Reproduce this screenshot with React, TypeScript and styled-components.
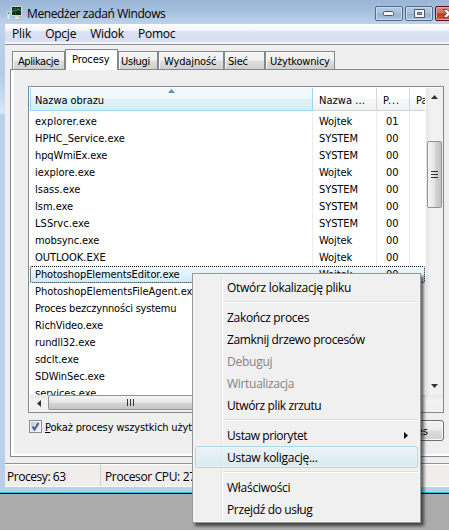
import React from "react";
import styled, { createGlobalStyle } from "styled-components";

const Global = createGlobalStyle`
  * { box-sizing: border-box; }
  body { margin: 0; overflow: hidden; background: #ababab; }
`;

const tahoma = `"DejaVu Sans Condensed", "DejaVu Sans", sans-serif`;
const segoe = `"Open Sans", "Noto Sans", sans-serif`;

const Desktop = styled.div`
  position: relative;
  width: 449px;
  height: 530px;
  overflow: hidden;
  background: #ababab;
  color: #000;
  white-space: nowrap;
`;

const Window = styled.main`
  height: 494px;
  display: flex;
  flex-direction: column;
  padding: 0 0 6px 5px;
  border-bottom: 1px solid #050505;
  box-shadow: inset 0 -1px #18c9df;
  background: linear-gradient(#9bb5d6 0, #a5c0de 12px, #bdd3ea 24px, #b4cce8 75px, #d8e7f7 113px, #b9cfea 115px, #b9cfea 100%);
`;

const TitleBar = styled.header`
  height: 24px;
  flex: none;
  display: flex;
  align-items: flex-start;
  padding: 5px 0 0 2px;
  font: 12px/18px ${segoe};
`;

const Title = styled.span`
  flex: 1;
  padding-left: 4px;
  letter-spacing: -0.4px;
`;

const Captions = styled.div`
  width: 74px;
  height: 16px;
  margin-top: 1px;
  display: flex;
  gap: 2px;
  overflow: hidden;
`;

const CaptionButton = styled.div<{ $close?: boolean }>`
  flex: none;
  width: 28px;
  height: 15px;
  display: flex;
  align-items: center;
  justify-content: ${(p) => (p.$close ? "flex-start" : "center")};
  padding-left: ${(p) => (p.$close ? 6 : 0)}px;
  border: 1px solid ${(p) => (p.$close ? "#5b0d18" : "#526b8b")};
  border-radius: 2px;
  box-shadow: inset 0 0 0 1px ${(p) => (p.$close ? "#e5a79b" : "#c9dcee")};
  background: ${(p) =>
    p.$close
      ? "linear-gradient(#d99482 0, #cb6f56 6px, #b43a20 7px, #ca6046 100%)"
      : "linear-gradient(#b5cbe1 0, #a9c2dc 6px, #94b1d0 7px, #adc7e0 100%)"};
`;

const MenuBar = styled.nav`
  height: 21px;
  flex: none;
  display: flex;
  align-items: center;
  gap: 14px;
  padding: 0 0 1px 7px;
  border-bottom: 1px solid #8f8f96;
  background: linear-gradient(#fff 0, #f3f5fb 6px, #dce1f2 8px, #d9def0 17px, #f7f7fb 19px);
  font: 12px/18px ${segoe};
`;

const MenuTitle = styled.span<{ $tracking: number }>`
  letter-spacing: ${(p) => p.$tracking}px;
`;

const Client = styled.section`
  flex: 1;
  min-height: 0;
  display: flex;
  flex-direction: column;
  padding: 4px 0 6px 5px;
  background: #efefef;
`;

const Tabs = styled.div`
  height: 21px;
  flex: none;
  display: flex;
  align-items: flex-end;
  padding-left: 2px;
  border-bottom: 1px solid #85878f;
`;

const Tab = styled.div<{ $width: number; $indent: number; $active?: boolean; $tracking?: number }>`
  width: ${(p) => p.$width}px;
  height: ${(p) => (p.$active ? 21 : 18)}px;
  margin-bottom: ${(p) => (p.$active ? -1 : 0)}px;
  padding: 1px 0 0 ${(p) => p.$indent}px;
  border: 1px solid #85878f;
  border-bottom: 0;
  background: ${(p) => (p.$active ? "#fff" : "linear-gradient(#f3f3f3 0 8px, #dfdfdf 9px, #cfcfcf)")};
  box-shadow: inset 1px 1px #fafafa;
  font: 11px/18px ${tahoma};
  letter-spacing: ${(p) => p.$tracking ?? 0}px;
`;

const TabPage = styled.div`
  flex: 1;
  min-height: 0;
  display: flex;
  flex-direction: column;
  align-items: flex-start;
  padding: 16px 0 0 17px;
  border-left: 1px solid #85878f;
  border-bottom: 1px solid #85878f;
  box-shadow: inset 3px -2px #fff;
`;

const ListBox = styled.div`
  width: 416px;
  height: 327px;
  flex: none;
  display: grid;
  grid-template: 307px 17px / 396px 17px;
  border: 1px solid #828790;
  padding: 1px 0 0 1px;
  background: #fff;
`;

const ListView = styled.div`
  width: 395px;
  height: 307px;
  overflow: hidden;
`;

const columns = "283px 64px 33px 16px";

const HeaderRow = styled.div`
  height: 23px;
  display: grid;
  grid-template-columns: ${columns};
`;

const HeaderCell = styled.div<{ $sorted?: boolean; $tracking?: number }>`
  position: relative;
  overflow: hidden;
  padding: 6px 0 0 ${(p) => (p.$sorted ? 4 : 6)}px;
  border: solid ${(p) => (p.$sorted ? "#96d9f9" : "#d5d5d5")};
  border-width: 0 1px 1px ${(p) => (p.$sorted ? 1 : 0)}px;
  background: ${(p) =>
    p.$sorted ? "linear-gradient(#f2f9fc 0 10px, #e1f1f9 11px, #d8ecf6)" : "linear-gradient(#fff 0 10px, #f7f8fa 11px, #f1f2f4)"};
  font: 11px/14px ${tahoma};
  letter-spacing: ${(p) => p.$tracking ?? 0}px;
`;

const SortMark = styled.svg`
  position: absolute;
  left: 137px;
  top: 1px;
`;

const Rows = styled.div`
  padding-top: 2px;
  background: linear-gradient(90deg, transparent 282px, #ececec 282px 283px, transparent 283px 346px, #ececec 346px 347px, transparent 347px 379px, #ececec 379px 380px, transparent 380px);
`;

const Row = styled.div<{ $selected?: boolean }>`
  height: 17px;
  display: grid;
  grid-template-columns: ${columns};
  font: 11px/18px ${tahoma};
  border-radius: 2px;
  background: ${(p) => (p.$selected ? "linear-gradient(#f1fafe, #cfeaf7)" : "none")};
  outline: ${(p) => (p.$selected ? "1px dotted #111" : "none")};
  outline-offset: -1px;
`;

const Cell = styled.span<{ $indent: number; $tracking?: number }>`
  padding-left: ${(p) => p.$indent}px;
  letter-spacing: ${(p) => p.$tracking ?? 0}px;
`;

const VScroll = styled.div`
  display: flex;
  flex-direction: column;
  justify-content: space-between;
  align-items: center;
  padding-bottom: 1px;
  background: linear-gradient(90deg, #e6e6e6, #f2f2f2 5px, #f0f0f0);
`;

const ScrollArrow = styled.div`
  width: 17px;
  height: 17px;
  flex: none;
  display: flex;
  align-items: center;
  justify-content: center;
`;

const VThumb = styled.div`
  width: 15px;
  height: 67px;
  margin: 36px 0 auto;
  display: flex;
  align-items: center;
  justify-content: center;
  border: 1px solid #929292;
  border-radius: 2px;
  background: linear-gradient(90deg, #f6f6f6, #e6e6e6 6px, #d1d1d4 8px, #c4c4c7);
`;

const HScroll = styled.div`
  display: flex;
  grid-column: 1 / 3;
  background: linear-gradient(#e6e6e6, #f2f2f2 5px, #f0f0f0);
`;

const HThumb = styled.div`
  width: 165px;
  height: 15px;
  margin-left: 1px;
  display: flex;
  align-items: center;
  justify-content: center;
  border: 1px solid #929292;
  border-radius: 2px;
  background: linear-gradient(#f6f6f6, #e6e6e6 6px, #d1d1d4 8px, #c4c4c7);
`;

const Options = styled.div`
  width: 416px;
  display: flex;
  justify-content: space-between;
  padding: 7px 0 0 1px;
  font: 11px/14px ${tahoma};
`;

const CheckLabel = styled.div`
  display: flex;
  gap: 3px;
  letter-spacing: -0.15px;
`;

const CheckText = styled.span`
  padding-top: 1px;
`;

const CheckBox = styled.div`
  width: 13px;
  height: 13px;
  display: flex;
  border: 1px solid #8b8c8f;
  background: linear-gradient(135deg, #c3c8d0, #f5f6f7);
  box-shadow: inset 0 0 0 1px #f5f5f5;
`;

const PushButton = styled.div`
  width: 110px;
  height: 21px;
  padding: 4px 15px 0 0;
  text-align: right;
  border: 1px solid #707070;
  border-radius: 3px;
  box-shadow: inset 0 0 0 1px #fafafa;
  background: linear-gradient(#f2f2f2, #ebebeb 9px, #dcdcdc 10px, #cfcfcf);
`;

const StatusBar = styled.footer`
  height: 24px;
  flex: none;
  display: flex;
  border-top: 1px solid #919196;
  border-bottom: 1px solid #fff;
  box-shadow: inset 0 1px #fff;
  background: #f0eded;
  font: 12px/23px ${segoe};
`;

const StatusCell = styled.div<{ $width: number; $indent: number; $tracking: number }>`
  width: ${(p) => p.$width}px;
  margin-top: 1px;
  padding-left: ${(p) => p.$indent}px;
  border-right: 1px solid #d2cfcf;
  letter-spacing: ${(p) => p.$tracking}px;
`;

const ContextMenu = styled.div`
  position: absolute;
  left: 192px;
  top: 273px;
  width: 229px;
  height: 250px;
  padding: 2px;
  border: 1px solid #979797;
  background: linear-gradient(90deg, transparent 28px, #e2e3e3 28px 29px, #fff 29px 30px, transparent 30px) 0 2px / 100% 244px no-repeat, #f0f0f0;
  box-shadow: inset 0 0 0 1px #f5f5f5, 3px 3px 3px rgba(0, 0, 0, 0.6);
  font: 12px/21px ${segoe};
`;

const MenuItem = styled.div<{ $disabled?: boolean; $hot?: boolean; $tracking: number }>`
  height: 22px;
  display: flex;
  align-items: center;
  justify-content: space-between;
  padding: 0 9px 0 31px;
  border: 1px solid ${(p) => (p.$hot ? "#a9d8eb" : "transparent")};
  border-radius: 3px;
  background: ${(p) => (p.$hot ? "linear-gradient(rgba(232,244,250,.65), rgba(208,232,243,.75))" : "none")};
  box-shadow: ${(p) => (p.$hot ? "inset 0 0 0 1px rgba(240,250,254,.6)" : "none")};
  color: ${(p) => (p.$disabled ? "#838383" : "#000")};
  letter-spacing: ${(p) => p.$tracking}px;
`;

const Separator = styled.div`
  height: 2px;
  margin: 3px 0 3px 28px;
  background: linear-gradient(#dfdfdf 50%, #fff 50%);
`;

function Glyph({ d, w, h, fill = "#333" }: { d: string; w: number; h: number; fill?: string }) {
  return <svg width={w} height={h} viewBox={`0 0 ${w} ${h}`}><path d={d} fill={fill} /></svg>;
}

const processes: [string, string, string, number][] = [
  ["explorer.exe", "Wojtek", "01", 0.12],
  ["HPHC_Service.exe", "SYSTEM", "00", 0],
  ["hpqWmiEx.exe", "SYSTEM", "00", -0.12],
  ["iexplore.exe", "Wojtek", "00", 0],
  ["lsass.exe", "SYSTEM", "00", 0.05],
  ["lsm.exe", "SYSTEM", "00", 0],
  ["LSSrvc.exe", "SYSTEM", "00", 0.05],
  ["mobsync.exe", "Wojtek", "00", -0.1],
  ["OUTLOOK.EXE", "Wojtek", "00", 0],
  ["PhotoshopElementsEditor.exe", "Wojtek", "00", -0.09],
  ["PhotoshopElementsFileAgent.exe", "Wojtek", "00", -0.05],
  ["Proces bezczynności systemu", "SYSTEM", "00", -0.2],
  ["RichVideo.exe", "SYSTEM", "00", -0.12],
  ["rundll32.exe", "Wojtek", "00", -0.1],
  ["sdclt.exe", "Wojtek", "00", -0.05],
  ["SDWinSec.exe", "SYSTEM", "00", -0.1],
  ["services.exe", "SYSTEM", "00", 0],
];

export default function App() {
  return (
    <Desktop>
      <Global />
      <Window>
        <TitleBar>
          <svg width="16" height="16" viewBox="0 0 16 16">
            <path d="M1.500 6v8" stroke="#dfe5e8" strokeWidth="2" />
            <path d="M1.500 7v2" stroke="#31a54a" />
            <path d="M4.500 1.500h10v9h-10z" fill="#13281b" stroke="#d3d8d8" />
            <path d="M5 7l2-2 2 1 2-2 3 2" stroke="#22b744" fill="none" />
            <path d="M5 3.500h9M8.500 2v8" stroke="#2f5a3b" strokeWidth=".6" />
            <path d="M8 11h4v2h2v1.500H6V13h2z" fill="#e6e6df" stroke="#a5a89e" strokeWidth=".5" />
          </svg>
          <Title>Menedżer zadań Windows</Title>
          <Captions>
            <CaptionButton>
              <svg width="12" height="5" viewBox="0 0 12 5"><rect x=".5" y=".5" width="10" height="4" rx="1" fill="#f4f4f4" stroke="#54585f" /></svg>
            </CaptionButton>
            <CaptionButton>
              <svg width="11" height="9" viewBox="0 0 11 9"><path d="M.5.5h10v8H.5zM3.500 3.500v2h4v-2z" fillRule="evenodd" fill="#f4f4f4" stroke="#54585f" /></svg>
            </CaptionButton>
            <CaptionButton $close>
              <svg width="14" height="9" viewBox="0 0 14 9"><path d="M1 .5h4l2 2 2-2h4L9.500 4.500 13 8.500H9l-2-2-2 2H1l3.500-4z" fill="#f4f4f4" stroke="#5b4b55" /></svg>
            </CaptionButton>
          </Captions>
        </TitleBar>
        <MenuBar>
          <MenuTitle $tracking={-0.1}>Plik</MenuTitle>
          <MenuTitle $tracking={-0.25}>Opcje</MenuTitle>
          <MenuTitle $tracking={-0.25}>Widok</MenuTitle>
          <MenuTitle $tracking={-0.2}>Pomoc</MenuTitle>
        </MenuBar>
        <Client>
          <Tabs>
            <Tab $width={53} $indent={5} $tracking={-0.4}>Aplikacje</Tab>
            <Tab $width={53} $indent={6} $tracking={-0.1} $active>Procesy</Tab>
            <Tab $width={40} $indent={2} $tracking={-0.25}>Usługi</Tab>
            <Tab $width={66} $indent={5} $tracking={-0.12}>Wydajność</Tab>
            <Tab $width={41} $indent={3} $tracking={-0.2}>Sieć</Tab>
            <Tab $width={70} $indent={4} $tracking={-0.2}>Użytkownicy</Tab>
          </Tabs>
          <TabPage>
            <ListBox>
              <ListView>
                <HeaderRow>
                  <HeaderCell $sorted $tracking={-0.08}>
                    Nazwa obrazu
                    <SortMark width="7" height="4" viewBox="0 0 7 4"><path d="M0 4 3.500 0 7 4z" fill="#5592b4" /></SortMark>
                  </HeaderCell>
                  <HeaderCell $tracking={0.05}>Nazwa ...</HeaderCell>
                  <HeaderCell $tracking={0.8}>P...</HeaderCell>
                  <HeaderCell>Pa</HeaderCell>
                </HeaderRow>
                <Rows>
                  {processes.map(([name, user, cpu, tracking]) => (
                    <Row key={name} $selected={name.includes("Editor")}>
                      <Cell $indent={5} $tracking={tracking}>{name}</Cell>
                      <Cell $indent={6} $tracking={-0.1}>{user}</Cell>
                      <Cell $indent={9}>{cpu}</Cell>
                    </Row>
                  ))}
                </Rows>
              </ListView>
              <VScroll>
                <ScrollArrow><Glyph w={7} h={4} d="M0 4 3.500 0 7 4z" /></ScrollArrow>
                <VThumb><Glyph w={7} h={8} d="M0 0h7v1H0zM0 3h7v1H0zM0 6h7v1H0z" /></VThumb>
                <ScrollArrow><Glyph w={7} h={4} d="M0 0h7L3.500 4z" /></ScrollArrow>
              </VScroll>
              <HScroll>
                <ScrollArrow><Glyph w={4} h={7} d="M4 0v7L0 3.500z" /></ScrollArrow>
                <HThumb><Glyph w={8} h={7} d="M0 0h1v7H0zM3 0h1v7H3zM6 0h1v7H6z" /></HThumb>
              </HScroll>
            </ListBox>
            <Options>
              <CheckLabel>
                <CheckBox><svg width="11" height="11" viewBox="0 0 11 11"><path d="M2.500 5.500 4.500 8.500 8.500 2" fill="none" stroke="#3d5d9b" strokeWidth="2" /></svg></CheckBox>
                <CheckText><u>P</u>okaż procesy wszystkich użytkowników</CheckText>
              </CheckLabel>
              <PushButton>Zakończ proces</PushButton>
            </Options>
          </TabPage>
        </Client>
        <StatusBar>
          <StatusCell $width={96} $indent={2} $tracking={-0.45}>Procesy: 63</StatusCell>
          <StatusCell $width={120} $indent={4} $tracking={-0.35}>Procesor CPU: 27%</StatusCell>
        </StatusBar>
      </Window>
      <ContextMenu>
        <MenuItem $tracking={-0.29}>Otwórz lokalizację pliku</MenuItem>
        <Separator />
        <MenuItem $tracking={-0.32}>Zakończ proces</MenuItem>
        <MenuItem $tracking={-0.36}>Zamknij drzewo procesów</MenuItem>
        <MenuItem $tracking={-0.25} $disabled>Debuguj</MenuItem>
        <MenuItem $tracking={-0.3} $disabled>Wirtualizacja</MenuItem>
        <MenuItem $tracking={-0.38}>Utwórz plik zrzutu</MenuItem>
        <Separator />
        <MenuItem $tracking={-0.42}>Ustaw priorytet<Glyph w={4} h={7} d="M0 0 4 3.500 0 7z" fill="#000" /></MenuItem>
        <MenuItem $tracking={-0.28} $hot>Ustaw koligację...</MenuItem>
        <Separator />
        <MenuItem $tracking={-0.27}>Właściwości</MenuItem>
        <MenuItem $tracking={-0.36}>Przejdź do usług</MenuItem>
      </ContextMenu>
    </Desktop>
  );
}
